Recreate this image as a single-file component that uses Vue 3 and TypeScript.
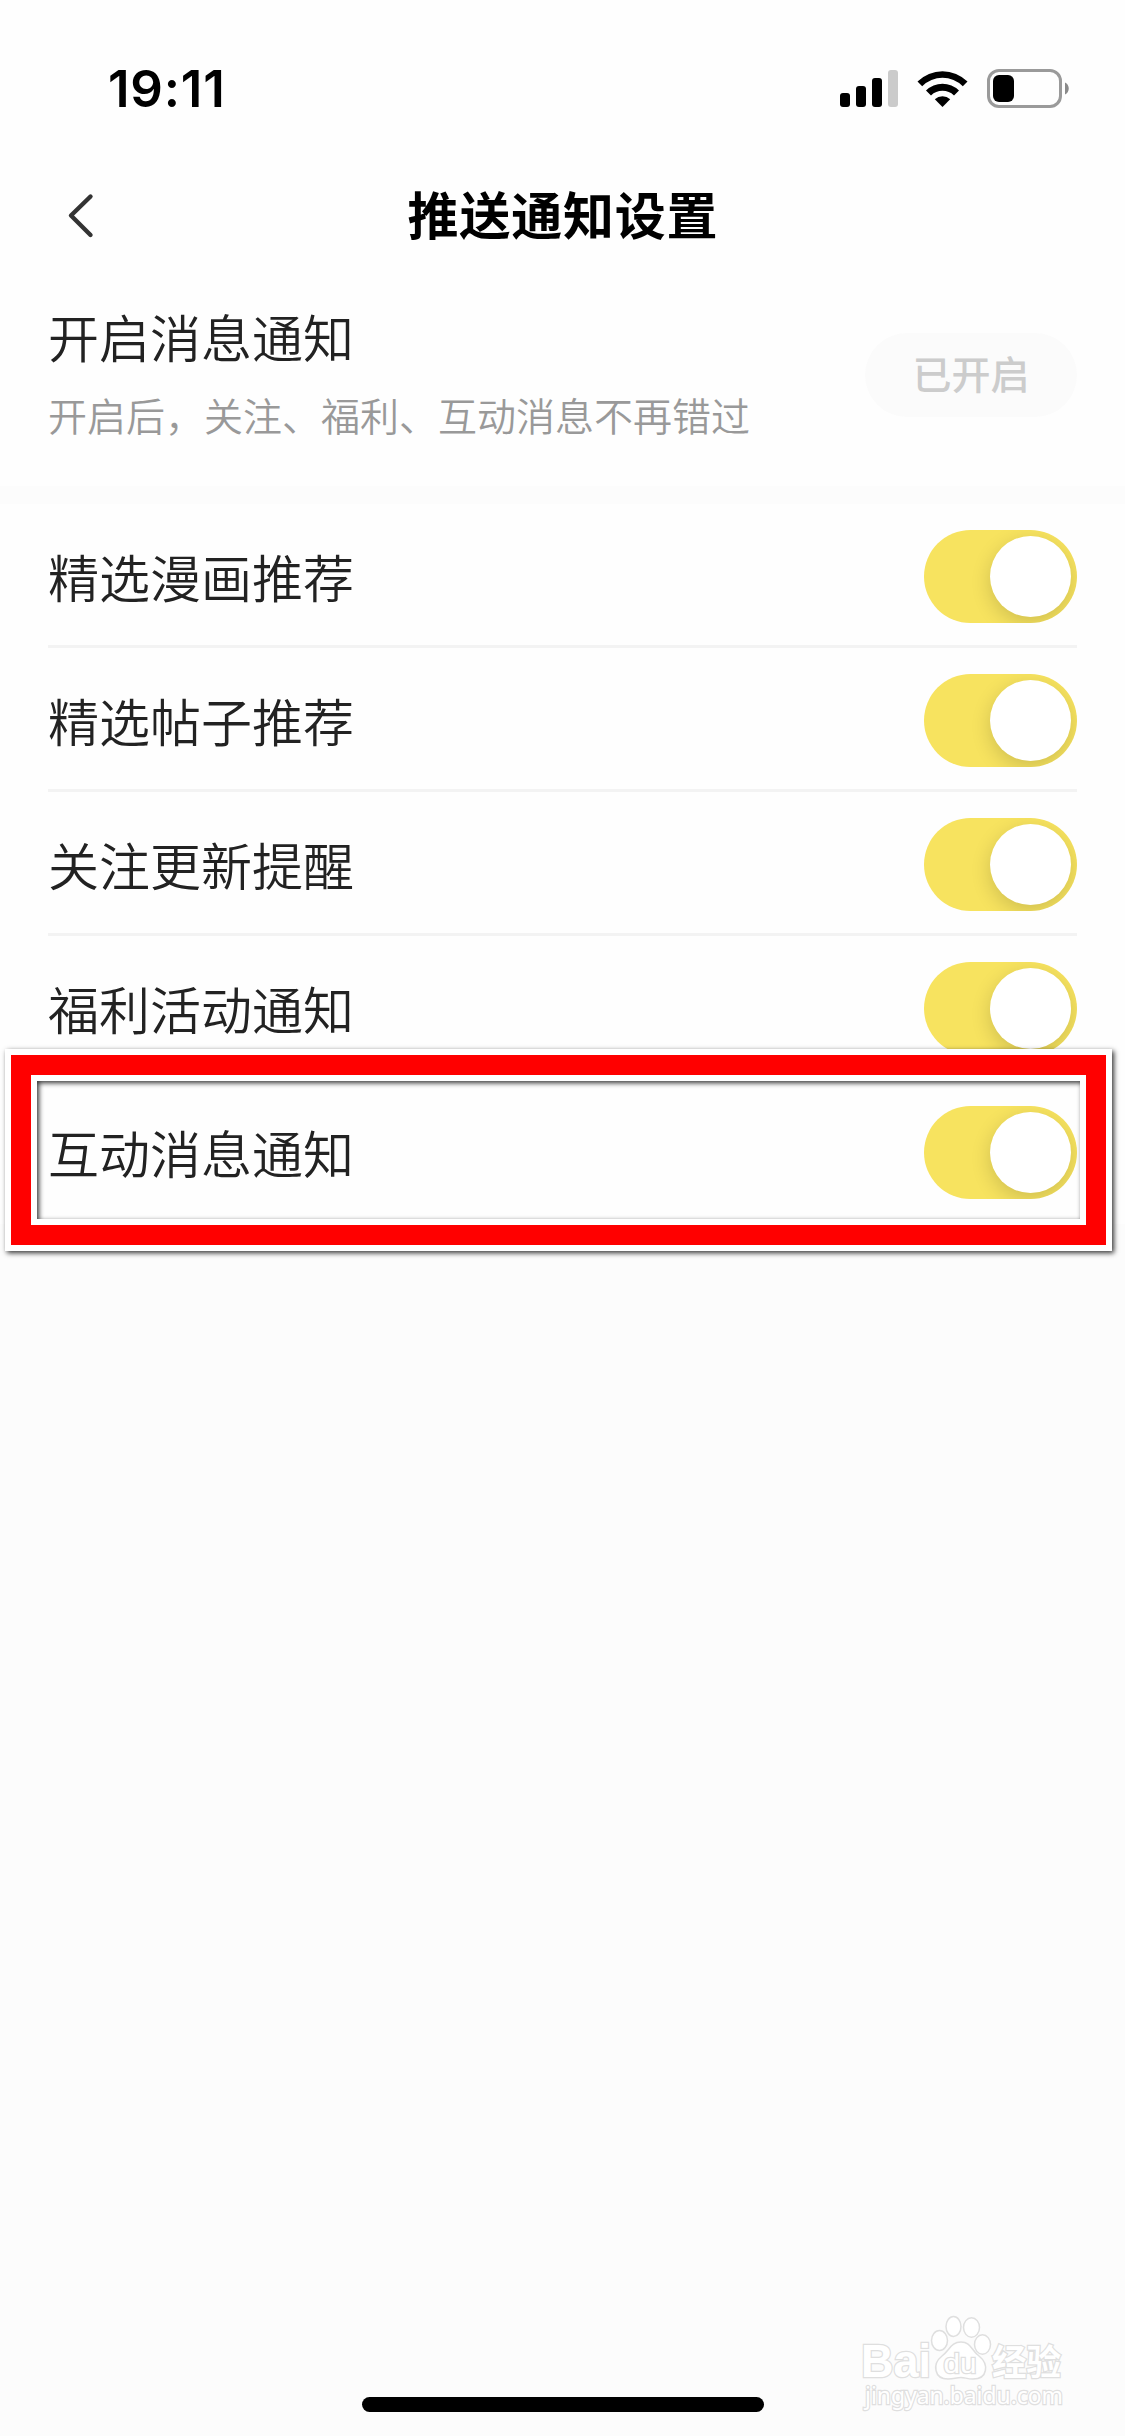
<script setup lang="ts">
interface Setting {
  label: string
  on: boolean
}

const settings: Setting[] = [
  { label: '精选漫画推荐', on: true },
  { label: '精选帖子推荐', on: true },
  { label: '关注更新提醒', on: true },
  { label: '福利活动通知', on: true },
  { label: '互动消息通知', on: true },
]
</script>

<template>
  <div class="screen">
    <header class="status">
      <span class="time">19:11</span>
      <svg class="status-icons" width="230" height="40" viewBox="0 0 230 40">
        <rect x="0" y="23" width="10" height="14" rx="3" />
        <rect x="16" y="16" width="10" height="21" rx="3" />
        <rect x="32" y="8" width="10" height="29" rx="3" />
        <rect x="48" y="0" width="10" height="37" rx="3" fill="#cbcbcb" />
        <path d="M77.5 11.5 A35.5 35.5 0 0 1 127.5 11.5 L122.8 16.2 A28.8 28.8 0 0 0 82.2 16.2 Z" />
        <path d="M86 20.5 A23.5 23.5 0 0 1 119 20.5 L114 25.4 A16.8 16.8 0 0 0 91 25.4 Z" />
        <path d="M94.8 29.3 A11.5 11.5 0 0 1 110.2 29.3 L102.5 37 Z" />
        <rect x="148.5" y="0.5" width="72" height="36" rx="10.5" fill="none" stroke="#9a9a9a" stroke-width="3" />
        <rect x="153" y="5" width="21" height="27" rx="6" />
        <path d="M225 12.5 C230 14.5 230 22.5 225 24.5 Z" fill="#8a8a8a" />
      </svg>
    </header>

    <nav class="nav">
      <svg class="back" width="30" height="48" viewBox="0 0 30 48">
        <path d="M23.5 4.5 L4 23.5 L23.5 43" fill="none" stroke="#333" stroke-width="4.4" stroke-linecap="round" stroke-linejoin="round" />
      </svg>
      <h1 class="title">推送通知设置</h1>
    </nav>

    <section class="master">
      <div class="master-text">
        <div class="label">开启消息通知</div>
        <div class="hint">开启后，关注、福利、互动消息不再错过</div>
      </div>
      <div class="pill">已开启</div>
    </section>

    <ul class="list">
      <li v-for="s in settings" :key="s.label" class="row">
        <span class="label">{{ s.label }}</span>
        <span class="toggle" :class="{ on: s.on }"><span class="knob"></span></span>
      </li>
    </ul>

    <div class="highlight"><div class="highlight-red"><div class="highlight-inner"></div></div></div>

    <svg class="watermark" width="215" height="115" viewBox="0 0 215 115">
      <g class="wm">
        <ellipse cx="84.5" cy="35.5" rx="8" ry="10" />
        <ellipse cx="98.5" cy="21.5" rx="7.5" ry="10" />
        <ellipse cx="116.5" cy="22.5" rx="8" ry="9.7" />
        <ellipse cx="127.5" cy="39.5" rx="8" ry="9.7" />
        <path d="M106 37 C116 37 116 45 124 51 C134 59 133 74 118 74 C112 74 110 72.5 106 72.5 C101 72.5 99 74 93 74 C79 74 77 59 87 51 C95 45 96 37 106 37 Z" />
        <text x="6" y="72" class="bai" textLength="70" lengthAdjust="spacingAndGlyphs">Bai</text>
        <text x="88.5" y="68" class="du" textLength="33" lengthAdjust="spacingAndGlyphs">du</text>
        <text x="137" y="70" class="jy" textLength="69" lengthAdjust="spacingAndGlyphs">经验</text>
        <text x="10" y="99" class="url" textLength="198" lengthAdjust="spacingAndGlyphs">jingyan.baidu.com</text>
      </g>
    </svg>
    <div class="home"></div>
  </div>
</template>

<style>
body {
  margin: 0;
}
</style>

<style scoped>
.screen {
  position: relative;
  width: 1125px;
  height: 2436px;
  overflow: hidden;
  background: #fcfcfc;
  font-family: 'Noto Sans CJK SC', sans-serif;
}
.status {
  box-sizing: border-box;
  display: flex;
  justify-content: space-between;
  height: 140px;
  padding: 70px 55px 0 108px;
  background: #fefefe;
}
.time {
  height: 40px;
  line-height: 38px;
  font-family: Inter, sans-serif;
  font-size: 51px;
  font-weight: 600;
  letter-spacing: 0.8px;
  color: #000;
}
.status-icons {
  overflow: visible;
}
.nav {
  display: flex;
  align-items: center;
  height: 152px;
  background: #fefefe;
}
.back {
  margin-left: 67px;
}
.title {
  flex: 1;
  margin: 0 96px 6px 0;
  text-align: center;
  font-size: 51px;
  font-weight: 700;
  letter-spacing: 0.8px;
  line-height: 74px;
  color: #000;
}
.master {
  box-sizing: border-box;
  display: flex;
  justify-content: space-between;
  height: 194px;
  padding: 7px 48px 0;
  background: #fefefe;
}
.label {
  font-size: 51px;
  line-height: 74px;
  font-weight: 350;
  color: #222;
}
.hint {
  margin-top: 13px;
  font-size: 39px;
  line-height: 56px;
  font-weight: 350;
  color: #999;
}
.pill {
  width: 212px;
  height: 84px;
  margin-top: 34px;
  border-radius: 42px;
  background: #fbfbfb;
  color: #ccc;
  font-size: 39px;
  font-weight: 500;
  line-height: 79px;
  text-align: center;
}
.list {
  margin: 18px 0 0;
  padding: 0 48px;
  list-style: none;
  background: #fefefe;
}
.row {
  box-sizing: border-box;
  display: flex;
  justify-content: space-between;
  height: 144px;
  padding-top: 26px;
  border-bottom: 3px solid #f3f3f3;
}
.row:last-child {
  border-bottom: 0;
}
.row .label {
  margin-top: 9px;
}
.toggle {
  box-sizing: border-box;
  display: flex;
  width: 153px;
  height: 93px;
  padding: 6px;
  border-radius: 46.5px;
  overflow: hidden;
  background: #ddd;
}
.toggle.on {
  justify-content: flex-end;
  background: #f7e35f;
}
.knob {
  width: 81px;
  height: 81px;
  border-radius: 50%;
  background: #fff;
  box-shadow: 0 6px 20px rgba(0, 0, 0, 0.16);
}
.highlight {
  position: absolute;
  left: 5px;
  top: 1049px;
  width: 1107px;
  height: 202px;
  box-sizing: border-box;
  border: 6px solid #fff;
  box-shadow: 2px 2px 5px rgba(0, 0, 0, 0.8);
}
.highlight-red {
  box-sizing: border-box;
  height: 100%;
  border: 20px solid #f00;
}
.highlight-inner {
  box-sizing: border-box;
  height: 100%;
  border: 6px solid #fff;
  box-shadow: inset 2px 2px 5px rgba(0, 0, 0, 0.8);
}
.watermark {
  position: absolute;
  left: 855px;
  top: 2305px;
  overflow: visible;
}
.wm {
  fill: #fff;
  stroke: #dfdfdf;
  stroke-width: 1.5px;
}
.wm text {
  paint-order: stroke;
  stroke-width: 2.5px;
}
.bai {
  font: 700 46px 'Liberation Sans', sans-serif;
}
.du {
  font: 400 28px 'Liberation Sans', sans-serif;
}
.jy {
  font: 700 35px 'Noto Sans CJK SC', sans-serif;
}
.url {
  font: 400 24px 'Noto Sans', sans-serif;
}
.home {
  position: absolute;
  left: 362px;
  top: 2397px;
  width: 402px;
  height: 15px;
  border-radius: 8px;
  background: #000;
}
</style>
